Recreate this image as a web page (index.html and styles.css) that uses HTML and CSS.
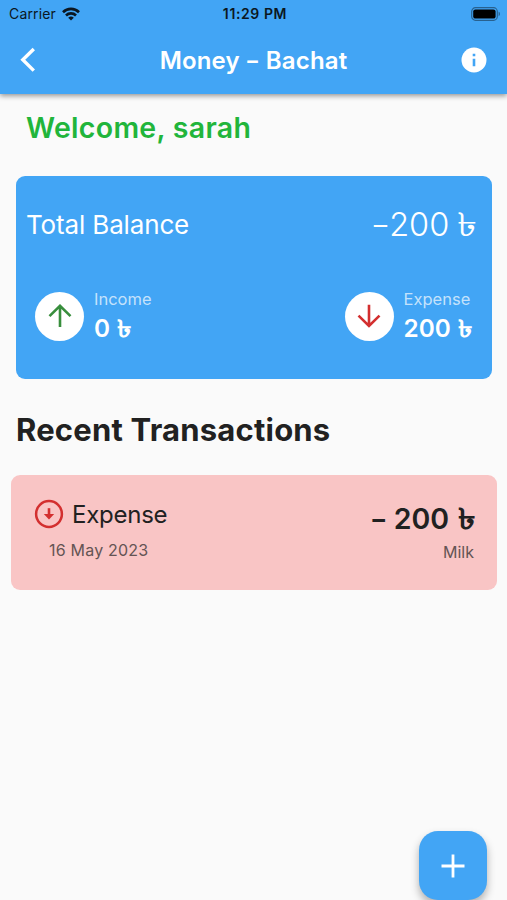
FILE: index.html
```html
<!DOCTYPE html>
<html lang="en">
  <head>
    <meta charset="UTF-8" />
    <meta name="viewport" content="width=device-width, initial-scale=1.0" />
    <title>Money - Bachat</title>
    <link rel="stylesheet" href="styles.css">
  </head>
  <body>
    <header class="app-bar">
      <div class="status-bar">
        <div class="carrier">
          <span class="carrier-name">Carrier</span>
          <svg class="wifi" viewBox="0 0 18 14" fill="none" stroke="#0b1722" stroke-width="2.6">
            <path d="M1 5.2a11.4 11.4 0 0 1 16 0" />
            <path d="M4 8.5a7 7 0 0 1 10 0" />
            <path d="M9 13.6 6.2 10.8a4 4 0 0 1 5.6 0z" fill="#0b1722" stroke="none" />
          </svg>
        </div>
        <span class="clock">11:29 PM</span>
        <svg class="battery" viewBox="0 0 30 14">
          <rect x="0.7" y="0.7" width="25.6" height="12.6" rx="3.8" fill="none" stroke="#28618f" stroke-width="1.2" />
          <rect x="2.2" y="2.4" width="22.4" height="9.2" rx="2.2" fill="#000" />
          <path d="M27.6 4.8c1.8.6 1.8 3.8 0 4.4z" fill="#28618f" />
        </svg>
      </div>
      <div class="toolbar">
        <svg class="back" viewBox="0 0 16 26" fill="none" stroke="#fff" stroke-width="3.4">
          <path d="M13.8 2 2.8 12.8l11 10.8" />
        </svg>
        <h1 class="title">Money <span class="dash">-</span> Bachat</h1>
        <svg class="info" viewBox="0 0 26 26">
          <circle cx="13" cy="13" r="12.5" fill="#fff" />
          <path d="M11.7 6.7h2.6v2.6h-2.6zM11.7 11.8h2.6v7.4h-2.6z" fill="#42a5f5" />
        </svg>
      </div>
    </header>

    <main class="content">
      <h2 class="welcome">Welcome, sarah</h2>

      <section class="balance-card">
        <div class="balance-row">
          <span class="balance-label">Total Balance</span>
          <span class="balance-value"><span class="dash">-</span>200 <span class="taka">৳</span></span>
        </div>
        <div class="summary-row">
          <div class="summary income">
            <div class="circle">
              <svg viewBox="0 0 24 24" fill="none" stroke="#388e3c" stroke-width="2.6">
                <path d="M12 23V2M1.5 12.2 12 1.8l10.5 10.4" />
              </svg>
            </div>
            <div class="summary-text">
              <span class="summary-label">Income</span>
              <span class="summary-value">0 <span class="taka">৳</span></span>
            </div>
          </div>
          <div class="summary expense">
            <div class="circle">
              <svg viewBox="0 0 24 24" fill="none" stroke="#d32f2f" stroke-width="2.6">
                <path d="M12 .8v21M1.5 11.6 12 22l10.5-10.4" />
              </svg>
            </div>
            <div class="summary-text">
              <span class="summary-label">Expense</span>
              <span class="summary-value">200 <span class="taka">৳</span></span>
            </div>
          </div>
        </div>
      </section>

      <h2 class="section-title">Recent Transactions</h2>

      <article class="transaction">
        <div class="transaction-info">
          <div class="transaction-type">
            <svg class="type-icon" viewBox="0 0 30 30" fill="none" stroke="#d32f2f">
              <circle cx="15" cy="15" r="12.9" stroke-width="2.5" />
              <path d="M15 9.2v8" stroke-width="2.6" />
              <path d="M9.8 15h10.4L15 20.4z" fill="#d32f2f" stroke="none" />
            </svg>
            <span class="type-name">Expense</span>
          </div>
          <span class="date">16 May 2023</span>
        </div>
        <div class="transaction-amount">
          <span class="amount"><span class="dash">-</span> 200 <span class="taka">৳</span></span>
          <span class="note">Milk</span>
        </div>
      </article>
    </main>

    <button class="add-button" aria-label="Add">
      <svg viewBox="0 0 24 24" stroke="#fff" stroke-width="2.8">
        <path d="M12 .5v23M.5 12h23" />
      </svg>
    </button>
  </body>
</html>
```

FILE: styles.css
```css
* {
  box-sizing: border-box;
}

body {
  position: relative;
  margin: 0;
  height: 900px;
  overflow: hidden;
  background: #fafafa;
  color: #212121;
  font-family: Inter, "Noto Sans", sans-serif;
}

h1,
h2 {
  margin: 0;
}

span,
h1,
h2 {
  white-space: nowrap;
}

svg {
  display: block;
}

/* wider hyphen and taka sign */
.dash {
  display: inline-block;
  margin: 0 0.05em;
  transform: scaleX(1.35);
}

.taka {
  display: inline-block;
  margin-left: 0.05em;
  padding-right: 0.08em;
  transform: scaleX(1.22);
  transform-origin: left;
}

.app-bar {
  height: 94px;
  background: #42a5f5;
  box-shadow: 0 2px 5px rgba(0, 0, 0, 0.4);
}

.status-bar {
  display: grid;
  grid-template-columns: 1fr auto 1fr;
  align-items: center;
  height: 27px;
  padding: 0 6px 0 9px;
  color: #0b1722;
  font-size: 14px;
}

.carrier {
  display: flex;
  align-items: center;
  gap: 6px;
}

.carrier-name {
  letter-spacing: 0.15px;
}

.wifi {
  width: 18px;
  height: 14px;
}

.clock {
  font-weight: 600;
  letter-spacing: 0.6px;
}

.battery {
  width: 30px;
  height: 14px;
  justify-self: end;
}

.toolbar {
  display: grid;
  grid-template-columns: 1fr auto 1fr;
  align-items: center;
  height: 66px;
  padding: 0 20px;
}

.back {
  width: 16px;
  height: 26px;
}

.title {
  color: #fff;
  font-size: 24px;
  font-weight: 600;
  letter-spacing: 0.15px;
}

.info {
  width: 26px;
  height: 26px;
  justify-self: end;
}

.welcome {
  height: 68px;
  margin-top: 14px;
  padding-left: 26px;
  color: #21b53b;
  font-size: 28.5px;
  font-weight: 600;
  letter-spacing: 0.3px;
  line-height: 40px;
}

.balance-card {
  height: 203px;
  margin: 0 15px 0 16px;
  padding: 28px 16px 0 10px;
  border-radius: 9px;
  background: #42a5f5;
  color: #fff;
}

.balance-row {
  display: flex;
  align-items: center;
  justify-content: space-between;
  height: 41px;
}

.balance-label {
  font-size: 26px;
  letter-spacing: -0.15px;
}

.balance-value {
  padding-top: 4px;
  font-size: 32.5px;
  font-weight: 300;
}

.balance-value .taka {
  margin-left: -0.03em;
}

.summary-row {
  display: flex;
  justify-content: space-between;
  margin-top: 43px;
  padding: 0 4px 0 9px;
}

.summary {
  display: flex;
  align-items: center;
  gap: 10px;
}

.circle {
  display: flex;
  align-items: center;
  justify-content: center;
  width: 49px;
  height: 49px;
  border-radius: 50%;
  background: #fff;
}

.circle svg {
  width: 24px;
  height: 24px;
}

.summary-text {
  display: flex;
  flex-direction: column;
  margin-top: -2px;
}

.summary-label {
  color: rgba(255, 255, 255, 0.7);
  font-size: 16.5px;
  line-height: 26px;
}

.summary-value {
  font-size: 24.3px;
  font-weight: 600;
  line-height: 32px;
}

.section-title {
  margin: 31px 0 0 16px;
  font-size: 31px;
  font-weight: 700;
  letter-spacing: 0.2px;
  line-height: 40px;
}

.transaction {
  display: flex;
  justify-content: space-between;
  height: 115px;
  margin: 25px 10px 0 11px;
  padding: 22px 23px 0 23px;
  border-radius: 9px;
  background: #f9c5c5;
}

.transaction-type {
  display: flex;
  align-items: center;
  gap: 8px;
  height: 34px;
}

.type-icon {
  width: 30px;
  height: 30px;
}

.type-name {
  font-size: 24px;
  letter-spacing: -0.25px;
}

.date,
.note {
  color: #645454;
  font-size: 16px;
}

.date {
  display: block;
  padding-left: 15px;
  letter-spacing: 0.2px;
  line-height: 38px;
}

.transaction-amount {
  display: flex;
  flex-direction: column;
  align-items: flex-end;
}

.amount {
  font-size: 28.5px;
  font-weight: 600;
  line-height: 43px;
}

.note {
  line-height: 25px;
}

.add-button {
  position: absolute;
  right: 20px;
  bottom: 0;
  display: flex;
  align-items: center;
  justify-content: center;
  width: 68px;
  height: 69px;
  padding: 0;
  border: 0;
  border-radius: 19px;
  background: #42a5f5;
  box-shadow: 0 5px 9px rgba(0, 0, 0, 0.3);
}

.add-button svg {
  width: 24px;
  height: 24px;
}
```
